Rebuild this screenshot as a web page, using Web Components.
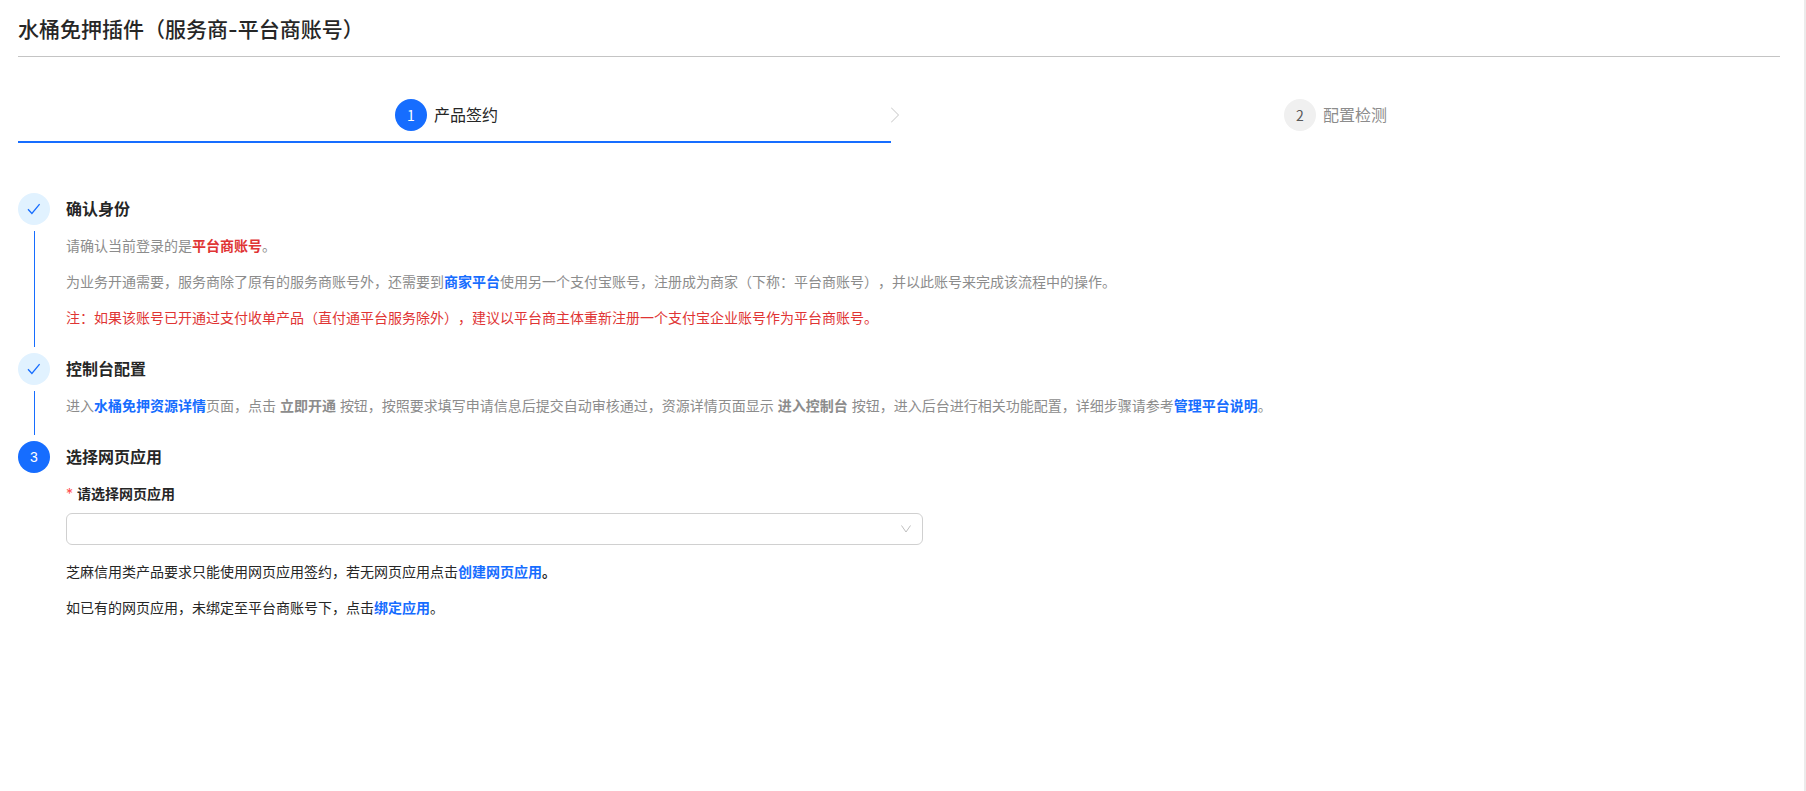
<!DOCTYPE html>
<html lang="zh-CN">
<head>
<meta charset="utf-8">
<title>水桶免押插件</title>
<style>
  html, body {
    height: 100%;
  }

  body {
    --primary: #166dff;
    --primary-light: #e1f2ff;
    --danger: #e03434;
    --text: #262626;
    --muted: #8c8c8c;
    margin: 0;
    background: #fff;
    color: var(--text);
    font-family: Inter, "Noto Sans CJK SC", sans-serif;
    font-size: 14px;
    line-height: 22px;
    text-spacing-trim: space-all;
  }

  p {
    margin: 0;
  }

  a {
    color: var(--primary);
    font-weight: 600;
    text-decoration: none;
  }

  strong {
    font-weight: 600;
  }

  .danger {
    color: var(--danger);
  }
</style>
</head>
<body>
<plugin-page heading="水桶免押插件（服务商-平台商账号）">
  <nav-steps slot="nav">
    <nav-step number="1" active>产品签约</nav-step>
    <nav-step number="2">配置检测</nav-step>
  </nav-steps>

  <task-step heading="确认身份" status="done">
    <p>请确认当前登录的是<strong class="danger">平台商账号</strong>。</p>
    <p>为业务开通需要，服务商除了原有的服务商账号外，还需要到<a href="#">商家平台</a>使用另一个支付宝账号，注册成为商家（下称：平台商账号），并以此账号来完成该流程中的操作。</p>
    <p class="danger">注：如果该账号已开通过支付收单产品（直付通平台服务除外），建议以平台商主体重新注册一个支付宝企业账号作为平台商账号。</p>
  </task-step>

  <task-step heading="控制台配置" status="done">
    <p>进入<a href="#">水桶免押资源详情</a>页面，点击 <strong>立即开通</strong> 按钮，按照要求填写申请信息后提交自动审核通过，资源详情页面显示 <strong>进入控制台</strong> 按钮，进入后台进行相关功能配置，详细步骤请参考<a href="#">管理平台说明</a>。</p>
  </task-step>

  <task-step heading="选择网页应用" number="3" status="current">
    <select-field label="请选择网页应用"></select-field>
    <p>芝麻信用类产品要求只能使用网页应用签约，若无网页应用点击<a href="#">创建网页应用</a><strong>。</strong></p>
    <p>如已有的网页应用，未绑定至平台商账号下，点击<a href="#">绑定应用</a>。</p>
  </task-step>
</plugin-page>

<script>
class PluginPage extends HTMLElement {
  constructor () {
    super()
    this.shadow = this.attachShadow({ mode: 'open' })
  }

  connectedCallback () {
    this.render()
  }

  render () {
    this.shadow.innerHTML =
    /* html */`
    <style>
      :host {
        display: block;
        box-sizing: border-box;
        min-height: 100%;
        padding: 14px 24px 24px 18px;
        border-right: 2px solid #ebebeb;
      }

      h1 {
        margin: 0;
        padding-bottom: 10px;
        border-bottom: 1px solid #c4c4c4;
        font-size: 21px;
        font-weight: 500;
        line-height: 32px;
      }

      .nav {
        padding: 42px 0 50px;
      }
    </style>

    <header><h1>${this.getAttribute('heading')}</h1></header>
    <nav class="nav"><slot name="nav"></slot></nav>
    <main><slot></slot></main>
    `
  }
}

class NavSteps extends HTMLElement {
  constructor () {
    super()
    this.shadow = this.attachShadow({ mode: 'open' })
  }

  connectedCallback () {
    this.render()
  }

  render () {
    this.shadow.innerHTML =
    /* html */`
    <style>
      :host {
        display: flex;
        margin-left: -16px;
      }
    </style>

    <slot></slot>
    `
  }
}

class NavStep extends HTMLElement {
  constructor () {
    super()
    this.shadow = this.attachShadow({ mode: 'open' })
  }

  connectedCallback () {
    this.render()
  }

  render () {
    this.shadow.innerHTML =
    /* html */`
    <style>
      :host {
        display: block;
        position: relative;
        flex: 1;
        color: var(--muted);
        font-size: 16px;
        line-height: 32px;
      }

      .step {
        display: flex;
        justify-content: center;
        gap: 7px;
        padding-bottom: 10px;
      }

      .number {
        width: 32px;
        height: 32px;
        border-radius: 50%;
        background: #f0f0f0;
        color: #595959;
        font-family: "Noto Sans CJK SC", sans-serif;
        font-size: 14px;
        text-align: center;
      }

      .bar {
        height: 2px;
        margin-left: 16px;
      }

      /* Flecha entre pasos */
      .arrow {
        position: absolute;
        top: 8px;
        left: 100%;
        width: 10px;
        height: 16px;
        fill: none;
        stroke: #c4c4c4;
      }

      :host(:last-child) .arrow {
        display: none;
      }

      :host([active]) {
        color: var(--text);
      }

      :host([active]) .number {
        background: var(--primary);
        color: white;
      }

      :host([active]) .bar {
        background: var(--primary);
      }
    </style>

    <div class="step">
      <span class="number">${this.getAttribute('number')}</span>
      <span><slot></slot></span>
    </div>
    <div class="bar"></div>
    <svg class="arrow" viewBox="0 0 10 16" aria-hidden="true"><path d="M0 0.5L7.5 8L0 15.5" /></svg>
    `
  }
}

class TaskStep extends HTMLElement {
  constructor () {
    super()
    this.shadow = this.attachShadow({ mode: 'open' })
  }

  connectedCallback () {
    this.render()
  }

  icon () {
    if (this.getAttribute('status') !== 'done') {
      return this.getAttribute('number')
    }

    return /* html */`
      <svg viewBox="0 0 14 12" aria-hidden="true"><path d="M1 6.2L4.9 10.4L12.6 1.2" /></svg>
    `
  }

  render () {
    this.shadow.innerHTML =
    /* html */`
    <style>
      :host {
        display: flex;
        gap: 16px;
      }

      .rail {
        display: flex;
        flex-direction: column;
        align-items: center;
        gap: 6px;
        width: 32px;
        padding-bottom: 6px;
      }

      .icon {
        display: flex;
        align-items: center;
        justify-content: center;
        width: 32px;
        height: 32px;
        border-radius: 50%;
        background: var(--primary);
        color: white;
        font-family: "Liberation Sans", sans-serif;
      }

      .icon svg {
        width: 14px;
        height: 12px;
        fill: none;
        stroke: var(--primary);
        stroke-width: 1.3;
      }

      .line {
        flex: 1;
        width: 1px;
        background: var(--primary);
      }

      :host([status="done"]) .icon {
        background: var(--primary-light);
      }

      :host([status="current"]) .line {
        display: none;
      }

      .content {
        flex: 1;
        min-width: 0;
        padding-bottom: 24px;
      }

      h2 {
        margin: 0 0 10px;
        font-size: 16px;
        font-weight: 600;
        line-height: 32px;
      }

      .body {
        display: flex;
        flex-direction: column;
        gap: 14px;
      }

      :host([status="done"]) .body {
        color: var(--muted);
      }
    </style>

    <div class="rail">
      <div class="icon">${this.icon()}</div>
      <div class="line"></div>
    </div>
    <section class="content">
      <h2>${this.getAttribute('heading')}</h2>
      <div class="body"><slot></slot></div>
    </section>
    `
  }
}

class SelectField extends HTMLElement {
  constructor () {
    super()
    this.shadow = this.attachShadow({ mode: 'open' })
  }

  connectedCallback () {
    this.render()
  }

  render () {
    this.shadow.innerHTML =
    /* html */`
    <style>
      :host {
        display: block;
        width: 50%;
        padding-bottom: 2px;
      }

      label {
        display: block;
        margin-bottom: 8px;
        font-weight: 600;
      }

      .required {
        margin-right: 4px;
        color: #ff4d4f;
        font-weight: 400;
      }

      .control {
        display: grid;
        align-items: center;
      }

      select, svg {
        grid-area: 1 / 1;
      }

      select {
        appearance: none;
        box-sizing: border-box;
        width: 100%;
        height: 32px;
        padding: 0 32px 0 11px;
        border: 1px solid #d0d0d0;
        border-radius: 6px;
        background: white;
        color: inherit;
        font: inherit;
      }

      svg {
        justify-self: end;
        width: 12px;
        height: 12px;
        margin-right: 11px;
        fill: none;
        stroke: #bfbfbf;
        pointer-events: none;
      }
    </style>

    <label for="field"><span class="required">*</span>${this.getAttribute('label')}</label>
    <div class="control">
      <select id="field" required>
        <option value=""></option>
      </select>
      <svg viewBox="0 0 12 12" aria-hidden="true"><path d="M1.5 2.5L6 9L10.5 2.5" /></svg>
    </div>
    `
  }
}

customElements.define('plugin-page', PluginPage)
customElements.define('nav-steps', NavSteps)
customElements.define('nav-step', NavStep)
customElements.define('task-step', TaskStep)
customElements.define('select-field', SelectField)
</script>
</body>
</html>
